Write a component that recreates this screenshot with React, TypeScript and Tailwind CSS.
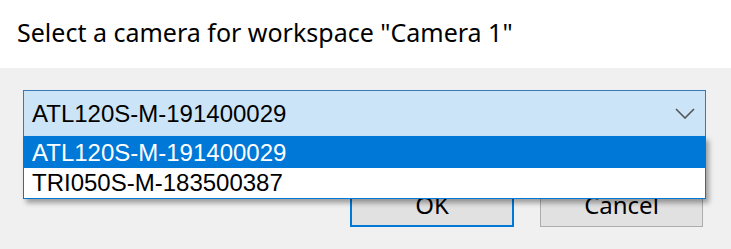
import React from 'react';

const cameras = ['ATL120S-M-191400029', 'TRI050S-M-183500387'];

function Chevron() {
  return (
    <svg width="20" height="11" viewBox="0 0 20 11" fill="none">
      <path d="M1 1 L10 10 L19 1" stroke="#555555" strokeWidth="1.6" />
    </svg>
  );
}

export default function App() {
  const selected = 0;
  return (
    <div className="w-[731px] h-[249px] flex flex-col bg-[#f0f0f0] overflow-hidden">
      <div className="h-[68px] bg-white flex items-center pl-[17px] pb-[2px]">
        <span className="text-[25px] text-black" style={{ fontFamily: '"Segoe UI", "Noto Sans", sans-serif' }}>
          Select a camera for workspace "Camera 1"
        </span>
      </div>

      <div className="flex flex-col pt-[22px]">
        <div className="relative ml-[23px] w-[683px]">
          <div className="h-[47px] border border-[#3a78b5] bg-[#cce4f7] flex items-center justify-between pl-[8px] pr-[10px]">
            <span className="text-[24px] text-black leading-none" style={{ fontFamily: '"Liberation Sans", Arial, sans-serif' }}>
              {cameras[selected]}
            </span>
            <Chevron />
          </div>

          <div className="absolute left-0 top-[46px] w-[683px] bg-white border border-[#0078d7] shadow-[3px_4px_5px_rgba(0,0,0,0.35)] z-10">
            {cameras.map((c, i) => (
              <div
                key={c}
                className={
                  i === selected
                    ? 'h-[31px] flex items-center pl-[8px] bg-[#0078d7] text-white'
                    : 'h-[30px] flex items-center pl-[8px] bg-white text-black'
                }
              >
                <span className="text-[24px] leading-none" style={{ fontFamily: '"Liberation Sans", Arial, sans-serif' }}>
                  {c}
                </span>
              </div>
            ))}
          </div>
        </div>

        <div className="flex justify-end gap-[26px] pr-[28px] mt-[46px]">
          <button className="w-[164px] h-[44px] bg-[#e1e1e1] border-2 border-[#0078d7] text-[24px] text-black" style={{ fontFamily: '"Segoe UI", "Noto Sans", sans-serif' }}>
            OK
          </button>
          <button className="w-[163px] h-[44px] bg-[#e1e1e1] border border-[#adadad] text-[24px] text-black" style={{ fontFamily: '"Segoe UI", "Noto Sans", sans-serif' }}>
            Cancel
          </button>
        </div>
      </div>
    </div>
  );
}
